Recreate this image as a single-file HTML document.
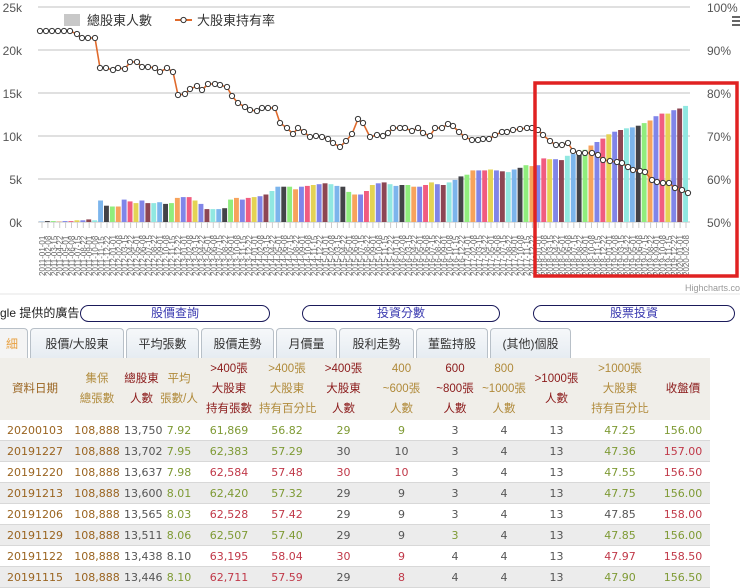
<!DOCTYPE html>
<html><head><meta charset="utf-8">
<style>
body{margin:0;width:740px;height:586px;overflow:hidden;background:#fff;font-family:"Liberation Sans","Noto Sans CJK TC",sans-serif;position:relative}
.abs{position:absolute}
.btn{position:absolute;top:305px;height:15px;border:1px solid #1a1a5a;border-radius:9px;color:#3a3ab0;font-size:12px;text-align:center;line-height:15px}
.tab{position:absolute;top:328px;height:30px;border:1px solid #b8c0c8;border-bottom:none;border-radius:4px 4px 0 0;background:linear-gradient(#f6f8fa,#e6ecf2);font-size:12px;color:#333;text-align:center;line-height:30px;box-sizing:border-box}
table{position:absolute;left:0;top:358px;width:710px;border-collapse:collapse;table-layout:fixed}
th{font-weight:normal;background:#f0eee9;height:62px;line-height:20px;padding:0;font-size:11.5px;white-space:nowrap;overflow:visible}
td{height:20px;text-align:center;padding:0;border-bottom:1px solid #d8d8d8;color:#555;font-family:"DejaVu Sans",sans-serif;font-size:11px;white-space:nowrap}
tr:nth-child(odd) td{background:#ececec}
.b{color:#9a6420}.g{color:#b08a3a}.r{color:#8b1a1a}.gr{color:#7e9a34}.rd{color:#c03848}
</style></head><body>
<svg class="abs" style="left:0;top:0" width="740" height="295" id="ch"></svg>
<div class="abs" style="left:0;top:305px;font-size:12px;line-height:16px;color:#222">gle 提供的廣告</div>
<div class="btn" style="left:80px;width:188px">股價查詢</div>
<div class="btn" style="left:302px;width:196px">投資分數</div>
<div class="btn" style="left:533px;width:200px">股票投資</div>
<div class="tab" style="left:-4px;width:32px;color:#e8a040;background:#f4f4f4">細</div>
<div class="tab" style="left:30px;width:94px">股價/大股東</div>
<div class="tab" style="left:126px;width:73px">平均張數</div>
<div class="tab" style="left:201px;width:73px">股價走勢</div>
<div class="tab" style="left:276px;width:61px">月價量</div>
<div class="tab" style="left:339px;width:75px">股利走勢</div>
<div class="tab" style="left:416px;width:72px">董監持股</div>
<div class="tab" style="left:490px;width:81px">(其他)個股</div>
<table>
<colgroup><col style="width:70px"><col style="width:54px"><col style="width:35px"><col style="width:40px"><col style="width:60px"><col style="width:56px"><col style="width:57px"><col style="width:59px"><col style="width:48px"><col style="width:50px"><col style="width:55px"><col style="width:72px"><col style="width:54px"></colgroup>
<tr><th class="b">資料日期</th><th class="g">集保<br>總張數</th><th class="r">總股東<br>人數</th><th class="g">平均<br>張數/人</th><th class="r">&gt;400張<br>大股東<br>持有張數</th><th class="g">&gt;400張<br>大股東<br>持有百分比</th><th class="r">&gt;400張<br>大股東<br>人數</th><th class="g">400<br>~600張<br>人數</th><th class="r">600<br>~800張<br>人數</th><th class="g">800<br>~1000張<br>人數</th><th class="r">&gt;1000張<br>人數</th><th class="g">&gt;1000張<br>大股東<br>持有百分比</th><th class="r">收盤價</th></tr>
<tr><td class="b">20200103</td><td class="b">108,888</td><td>13,750</td><td class="gr">7.92</td><td class="gr">61,869</td><td class="gr">56.82</td><td class="gr">29</td><td class="gr">9</td><td>3</td><td>4</td><td>13</td><td class="gr">47.25</td><td class="gr">156.00</td></tr>
<tr><td class="b">20191227</td><td class="b">108,888</td><td>13,702</td><td class="gr">7.95</td><td class="gr">62,383</td><td class="gr">57.29</td><td>30</td><td>10</td><td>3</td><td>4</td><td>13</td><td class="gr">47.36</td><td class="rd">157.00</td></tr>
<tr><td class="b">20191220</td><td class="b">108,888</td><td>13,637</td><td class="gr">7.98</td><td class="rd">62,584</td><td class="rd">57.48</td><td class="rd">30</td><td class="rd">10</td><td>3</td><td>4</td><td>13</td><td class="gr">47.55</td><td class="rd">156.50</td></tr>
<tr><td class="b">20191213</td><td class="b">108,888</td><td>13,600</td><td class="gr">8.01</td><td class="gr">62,420</td><td class="gr">57.32</td><td>29</td><td>9</td><td>3</td><td>4</td><td>13</td><td class="gr">47.75</td><td class="gr">156.00</td></tr>
<tr><td class="b">20191206</td><td class="b">108,888</td><td>13,565</td><td class="gr">8.03</td><td class="rd">62,528</td><td class="rd">57.42</td><td>29</td><td>9</td><td>3</td><td>4</td><td>13</td><td>47.85</td><td class="rd">158.00</td></tr>
<tr><td class="b">20191129</td><td class="b">108,888</td><td>13,511</td><td class="gr">8.06</td><td class="gr">62,507</td><td class="gr">57.40</td><td>29</td><td>9</td><td class="gr">3</td><td>4</td><td>13</td><td class="gr">47.85</td><td class="gr">156.00</td></tr>
<tr><td class="b">20191122</td><td class="b">108,888</td><td>13,438</td><td>8.10</td><td class="rd">63,195</td><td class="rd">58.04</td><td class="rd">30</td><td class="rd">9</td><td>4</td><td>4</td><td>13</td><td class="rd">47.97</td><td class="rd">158.50</td></tr>
<tr><td class="b">20191115</td><td class="b">108,888</td><td>13,446</td><td class="gr">8.10</td><td class="rd">62,711</td><td class="rd">57.59</td><td>29</td><td class="rd">8</td><td>4</td><td>4</td><td>13</td><td class="gr">47.90</td><td class="gr">156.50</td></tr>
</table>
<script>
var s='';
var gy=[7,50,93,136,179,222];
gy.forEach(function(y,i){s+='<line x1="38" x2="690" y1="'+y+'" y2="'+y+'" stroke="#d6d6d6" stroke-width="1.5"/>';
s+='<text x="22" y="'+(y+5)+'" font-size="12" fill="#555" text-anchor="end">'+(25-5*i)+'k</text>';
s+='<text x="707" y="'+(y+5)+'" font-size="12" fill="#555">'+(100-10*i)+'%</text>';});
var h=[0.05,0.1,0.1,0.05,0.1,0.1,0.2,0.2,0.3,0.2,
2.5,1.9,1.8,1.8,2.6,2.4,2.2,2.5,2.2,2.2,2.3,2.1,2.2,2.8,2.9,2.9,2.5,2.1,1.5,1.5,1.5,1.6,2.6,2.8,2.6,2.8,2.9,3.0,3.2,3.6,4.1,4.1,4.1,3.8,4.1,4.2,4.3,4.4,4.5,4.4,4.2,4.1,3.5,3.2,3.2,3.6,
4.3,4.5,4.6,4.4,4.2,4.3,4.3,4.1,4.1,4.3,4.6,4.4,4.3,4.6,4.9,5.3,5.5,6.0,6.0,6.0,6.1,6.0,5.9,5.8,6.1,6.3,6.6,6.5,6.6,7.4,7.3,7.3,7.2,7.7,7.9,8.2,8.4,8.9,9.3,9.7,10.2,10.5,10.7,10.9,11.0,11.2,11.5,11.8,12.3,12.6,12.6,13.0,13.2,13.5];
var cols=['#7cb5ec','#434348','#90ed7d','#f7a35c','#8085e9','#f15c80','#e4d354','#8085e8','#8d4653','#91e8e1'];
var st=650/h.length;
h.forEach(function(v,i){var x=39+i*st,hh=v*8.6;
s+='<rect x="'+x.toFixed(1)+'" y="'+(222-hh).toFixed(1)+'" width="'+(st-1).toFixed(1)+'" height="'+hh.toFixed(1)+'" fill="'+cols[i%10]+'"/>';
var m=(i%12)+1,d=((i*7)%28)+1;var lab='20'+(11+Math.floor(i/12))+'-'+(m<10?'0':'')+m+'-'+(d<10?'0':'')+d;
var cx=x+st/2+3;
s+='<line x1="'+(x+st/2).toFixed(1)+'" x2="'+(x+st/2).toFixed(1)+'" y1="222" y2="228" stroke="#ccc"/>';
s+='<text transform="translate('+cx.toFixed(1)+',276) rotate(-90)" font-size="8" fill="#666">'+lab+'</text>';});
var p=[[40,31],[46,31],[52,31],[58,31],[64,31],[70,31],[77,34],[82,38],[88,38],[95,38],[100,68],[106,68],[113,70],[118,68],[125,69],[130,62],[137,62],[142,67],[148,67],[155,68],[160,72],[167,68],[173,72],[178,95],[185,94],[190,89],[197,86],[202,90],[208,84],[215,84],[220,85],[227,87],[232,96],[238,103],[245,107],[250,110],[257,111],[262,108],[268,108],[275,108],[280,123],[287,128],[293,134],[298,128],[304,132],[310,137],[316,136],[322,137],[328,139],[333,143],[340,147],[346,141],[352,134],[358,119],[363,123],[370,137],[377,135],[383,136],[388,133],[393,128],[400,128],[405,128],[412,131],[418,128],[423,133],[430,136],[435,128],[442,128],[448,124],[453,126],[459,132],[465,137],[472,140],[478,140],[483,139],[489,139],[495,135],[502,132],[507,132],[513,130],[520,129],[527,128],[532,128],[538,130],[543,135],[550,141],[556,145],[562,145],[568,143],[573,151],[579,153],[585,153],[592,153],[598,155],[603,160],[610,161],[617,162],[622,163],[628,167],[633,170],[640,171],[645,172],[652,180],[657,182],[663,183],[669,183],[675,188],[682,190],[688,193]];
s+='<polyline fill="none" stroke="#e06a2c" stroke-width="1.6" points="'+p.map(function(a){return a.join(',')}).join(' ')+'"/>';
p.forEach(function(a){s+='<circle cx="'+a[0]+'" cy="'+a[1]+'" r="2.6" fill="#fff" stroke="#333" stroke-width="1"/>';});
s+='<rect x="64" y="14" width="16" height="12" fill="#c8c8c8"/><text x="87" y="25" font-size="13" fill="#333">總股東人數</text>';
s+='<line x1="175" x2="192" y1="20" y2="20" stroke="#e06a2c" stroke-width="2"/><circle cx="183.5" cy="20" r="2.6" fill="#fff" stroke="#333"/><text x="197" y="25" font-size="13" fill="#333">大股東持有率</text>';
s+='<rect x="535" y="83" width="202" height="193" fill="none" stroke="#e02222" stroke-width="3.5"/>';
s+='<text x="685" y="291" font-size="9" fill="#999">Highcharts.com</text>';
s+='<line x1="0" x2="740" y1="294" y2="294" stroke="#e4e4e4"/>';
s+='<rect x="732" y="16" width="8" height="2" fill="#666"/><rect x="732" y="20" width="8" height="2" fill="#666"/><rect x="732" y="24" width="8" height="2" fill="#666"/>';
document.getElementById('ch').innerHTML=s;
</script>
</body></html>
